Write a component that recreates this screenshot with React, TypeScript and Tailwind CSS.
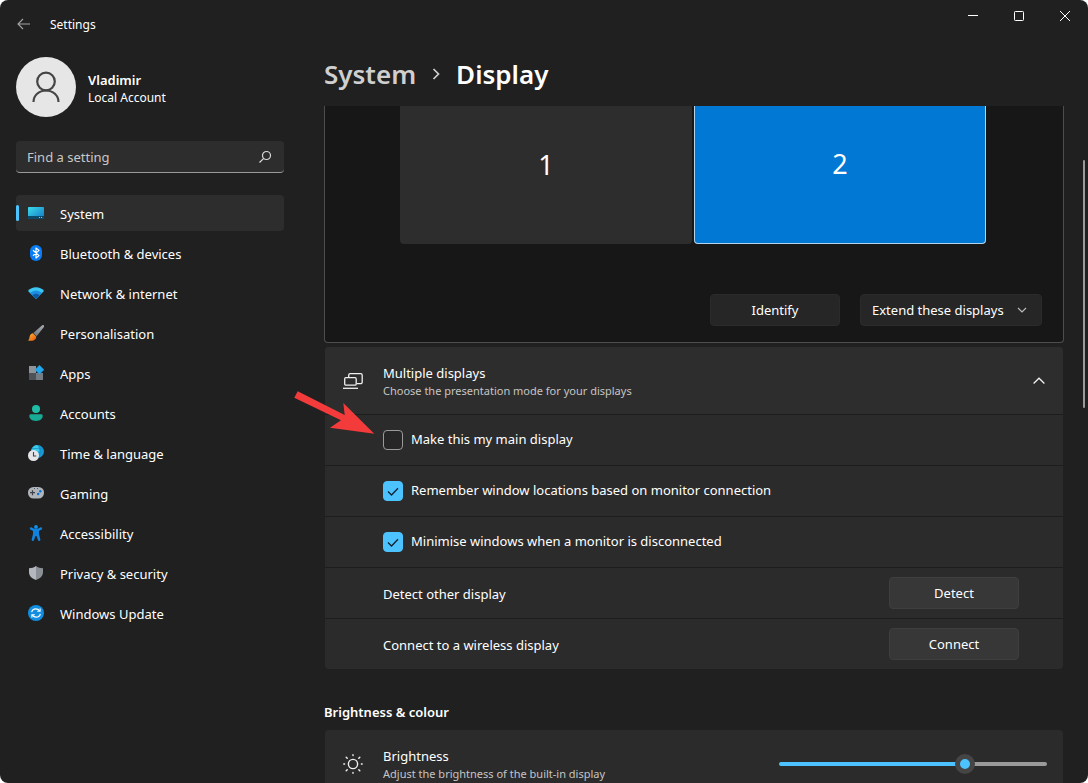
import React, { useState } from "react";

const BluetoothIcon = () => (
  <svg width="16" height="16" viewBox="0 0 16 16">
    <rect x="2" y="0" width="12" height="16" rx="6" fill="#0a7cf5" />
    <path d="M5 5.200 11 10.600 8 13V3l3 2.400-6 5.400" fill="none" stroke="#fff" strokeWidth="1.200" strokeLinejoin="round" />
  </svg>
);

const SystemIcon = () => (
  <svg width="16" height="16" viewBox="0 0 16 16">
    <defs>
      <linearGradient id="sys" x1="0" y1="0" x2="1" y2="1">
        <stop offset="0" stopColor="#3bdcec" />
        <stop offset="1" stopColor="#1276c4" />
      </linearGradient>
    </defs>
    <rect x="0" y="2" width="16" height="12" rx="0.8" fill="url(#sys)" />
    <path d="M0 11h16v2.200a.8.8 0 0 1-.8.8H.8a.8.8 0 0 1-.8-.8z" fill="#0b4a6b" />
    <path d="M11 12.500h1M13 12.500h1" stroke="#7cc8ee" />
  </svg>
);

const NetworkIcon = () => (
  <svg width="16" height="16" viewBox="0 0 16 16">
    <path d="M8 2.300c3.200 0 6 1.300 8 3.700L8 14 0 6c2-2.400 4.800-3.700 8-3.700z" fill="#3cc6f4" />
    <path d="M8 5.600c2.300 0 4.300.9 5.800 2.500L8 14 2.200 8.100C3.700 6.500 5.700 5.600 8 5.600z" fill="#1b8fe0" />
    <path d="M8 8.700c1.400 0 2.700.6 3.600 1.600L8 14l-3.600-3.700C5.300 9.300 6.600 8.700 8 8.700z" fill="#0c59a4" />
  </svg>
);

const BrushIcon = () => (
  <svg width="16" height="16" viewBox="0 0 16 16">
    <defs>
      <linearGradient id="brush" x1="0" y1="1" x2="1" y2="0">
        <stop offset="0" stopColor="#6b7177" />
        <stop offset="1" stopColor="#a9afb5" />
      </linearGradient>
      <linearGradient id="tip" x1="0" y1="0" x2="1" y2="1">
        <stop offset="0" stopColor="#fdb935" />
        <stop offset="1" stopColor="#e8540c" />
      </linearGradient>
    </defs>
    <path d="M15.700.3c.5.5.4 1.300 0 2L8.600 11.300 5.300 8 13.600.7c.7-.6 1.600-.8 2.100-.4z" fill="url(#brush)" />
    <path d="M4.900 8.300 8.200 11.500c.2 1.800-1 3.300-2.700 3.900-1.800.6-3.900.6-5.500.1C1.600 14.400 1.300 12.900 1.700 11.300 2.100 9.600 3.400 8.500 4.900 8.300z" fill="url(#tip)" />
  </svg>
);

const AppsIcon = () => (
  <svg width="16" height="16" viewBox="0 0 16 16">
    <rect x="1" y="1" width="7" height="7" fill="#8d949c" />
    <rect x="1" y="8" width="7" height="7" fill="#4d5258" />
    <rect x="8" y="8" width="7" height="7" fill="#757c84" />
    <path d="M11.500.3 15.900 4.700 11.500 9.100 7.100 4.700z" fill="#22a7ec" stroke="#22a7ec" strokeWidth=".6" strokeLinejoin="round" />
  </svg>
);

const AccountsIcon = () => (
  <svg width="16" height="16" viewBox="0 0 16 16">
    <circle cx="8" cy="4" r="4" fill="#20bda6" />
    <path d="M2.800 9.300h10.400c.9 0 1.500.6 1.500 1.500 0 3.200-2.800 5.200-6.700 5.200s-6.700-2-6.700-5.200c0-.9.6-1.500 1.500-1.500z" fill="#18ab96" />
  </svg>
);

const TimeIcon = () => (
  <svg width="16" height="16" viewBox="0 0 16 16">
    <circle cx="9.500" cy="6.500" r="6.500" fill="#1799d4" />
    <path d="M9.500 0C5.500.2 3.400 3 3 6.500h8.500C11.800 4 11 1.500 9.500 0z" fill="#3ccbe8" />
    <path d="M9.500 0c3.500 4 3.500 9 0 13M4 3.500h11" fill="none" stroke="#1584c0" strokeWidth=".6" />
    <circle cx="5.500" cy="10.500" r="5.500" fill="#e3e5e8" />
    <path d="M5.500 7v4h2.800" fill="none" stroke="#3c4248" strokeWidth="1.100" />
  </svg>
);

const GamingIcon = () => (
  <svg width="16" height="16" viewBox="0 0 16 16">
    <rect x="0" y="2" width="16" height="11.500" rx="5.500" fill="#b0b5bb" />
    <path d="M4.500 5.200v5M2 7.700h5" stroke="#3c4248" strokeWidth="1.200" />
    <path d="M6 3.500h1M9 3.500h1" stroke="#555b61" />
    <circle cx="12.300" cy="6.200" r="1.200" fill="#0a6fd6" />
    <circle cx="10.200" cy="9" r="1.200" fill="#0a6fd6" />
  </svg>
);

const AccessibilityIcon = () => (
  <svg width="16" height="16" viewBox="0 0 16 16">
    <circle cx="8" cy="1.900" r="1.900" fill="#1590e6" />
    <path d="M2 2.800c.5-.8 1.200-.7 1.800-.3C6.200 4.300 9.800 4.300 12.200 2.500c.6-.4 1.300-.5 1.800.3.400.7.100 1.300-.4 1.700-.8.600-1.800 1.100-2.600 1.500v3l1.300 5.300c.2.800-.1 1.400-.8 1.600-.7.200-1.300-.2-1.500-.9L8.500 11h-1L6 15c-.2.700-.8 1.100-1.500.9-.7-.2-1-.8-.8-1.600L5 9V6C4.200 5.600 3.200 5.100 2.400 4.500 1.900 4.100 1.600 3.500 2 2.800z" fill="#1183dc" />
  </svg>
);

const ShieldIcon = () => (
  <svg width="16" height="16" viewBox="0 0 16 16">
    <path d="M8 1c2 1.500 4.300 2.200 7 2.300V7c0 3.600-2.300 6.300-7 8z" fill="#8b9097" />
    <path d="M8 1C6 2.500 3.700 3.200 1 3.300V7c0 3.600 2.300 6.300 7 8z" fill="#b4b8be" />
  </svg>
);

const UpdateIcon = () => (
  <svg width="16" height="16" viewBox="0 0 16 16">
    <circle cx="8" cy="8" r="8" fill="#128ee0" />
    <path d="M3.700 7.200C4.100 5.100 5.800 3.900 7.900 3.900c1.600 0 2.900.8 3.700 2M12.300 8.800c-.4 2.100-2.100 3.300-4.200 3.300-1.600 0-2.900-.8-3.700-2" fill="none" stroke="#fff" strokeWidth="1.200" />
    <path d="M12.100 3.400v2.900H9.200M3.900 12.600V9.700h2.900" fill="none" stroke="#fff" strokeWidth="1.100" />
  </svg>
);

const nav = [
  { label: "System", Icon: SystemIcon },
  { label: "Bluetooth & devices", Icon: BluetoothIcon },
  { label: "Network & internet", Icon: NetworkIcon },
  { label: "Personalisation", Icon: BrushIcon },
  { label: "Apps", Icon: AppsIcon },
  { label: "Accounts", Icon: AccountsIcon },
  { label: "Time & language", Icon: TimeIcon },
  { label: "Gaming", Icon: GamingIcon },
  { label: "Accessibility", Icon: AccessibilityIcon },
  { label: "Privacy & security", Icon: ShieldIcon },
  { label: "Windows Update", Icon: UpdateIcon },
];

function TitleBar() {
  return (
    <header className="flex h-12 shrink-0 items-start justify-between">
      <div className="flex h-12 items-center">
        <button aria-label="Back" className="flex h-12 w-12 items-center justify-center">
          <svg width="14" height="12" viewBox="0 0 14 12" fill="none" stroke="#a3a3a3" strokeWidth="1.100">
            <path d="M13 6H1M6 1 1 6l5 5" />
          </svg>
        </button>
        <span className="pt-0.5 pl-0.5 text-xs">Settings</span>
      </div>
      <div className="flex">
        <button aria-label="Minimise" className="flex h-8 w-[46px] items-center justify-center">
          <svg width="10" height="10" viewBox="0 0 10 10" stroke="#fff"><path d="M0 4.500h10" /></svg>
        </button>
        <button aria-label="Maximise" className="flex h-8 w-[46px] items-center justify-center">
          <svg width="10" height="10" viewBox="0 0 10 10" fill="none" stroke="#fff"><rect x=".5" y=".5" width="9" height="9" rx=".8" /></svg>
        </button>
        <button aria-label="Close" className="flex h-8 w-[46px] items-center justify-center">
          <svg width="10" height="10" viewBox="0 0 10 10" stroke="#fff"><path d="M0 0l10 10M10 0 0 10" /></svg>
        </button>
      </div>
    </header>
  );
}

function Sidebar() {
  return (
    <aside className="w-[300px] shrink-0 px-4 pt-[9px]">
      <div className="flex items-center gap-3">
        <div className="flex size-[60px] items-center justify-center rounded-full bg-[#e6e6e6]">
          <svg width="28" height="32" viewBox="0 0 28 32" fill="none" stroke="#454545" strokeWidth="2.200">
            <circle cx="14" cy="10.500" r="8.800" />
            <path d="M1.500 31C1.500 24.500 7 19.500 14 19.500s12.500 5 12.500 11.500" />
          </svg>
        </div>
        <div className="pt-0.5">
          <div className="text-[13px] leading-5 font-semibold">Vladimir</div>
          <div className="text-xs leading-4">Local Account</div>
        </div>
      </div>
      <div className="mt-6 flex h-8 items-center rounded border-b border-[#9a9a9a] bg-[#2d2d2d] pr-3 pl-[11px]">
        <input
          type="text"
          aria-label="Find a setting"
          placeholder="Find a setting"
          className="min-w-0 flex-1 bg-transparent pt-0.5 text-[13px] outline-none placeholder:text-[#c8c8c8]"
        />
        <svg width="14" height="14" viewBox="0 0 14 14" fill="none" stroke="#dcdcdc" strokeWidth="1.200">
          <circle cx="8.500" cy="5.500" r="4" />
          <path d="M5.700 8.300 1.500 12.500" />
        </svg>
      </div>
      <nav className="mt-[22px] flex flex-col gap-1">
        {nav.map(({ label, Icon }, i) => (
          <a
            key={label}
            href="#"
            aria-current={i === 0 ? "page" : undefined}
            className={
              i === 0
                ? "relative flex h-9 items-center gap-4 rounded bg-[#2d2d2d] pl-3 text-[13px]"
                : "relative flex h-9 items-center gap-4 rounded pl-3 text-[13px]"
            }
          >
            {i === 0 && <span className="absolute left-0 h-4 w-[3px] rounded-full bg-[#4cc2ff]" />}
            <Icon />
            <span className="pt-1">{label}</span>
          </a>
        ))}
      </nav>
    </aside>
  );
}

function DisplayArrangement() {
  return (
    <section className="rounded-b border border-t-0 border-[#4d4d4d] bg-[#171717]">
      <div className="grid h-[138px] grid-cols-2 gap-0.5 pr-[77px] pl-[75px] text-[27px]">
        <button className="rounded-b bg-[#2d2d2d] pb-5">1</button>
        <button className="rounded-b border border-t-0 border-[#b5d3ea] bg-[#0078d4] pb-5">2</button>
      </div>
      <div className="flex justify-end gap-5 pt-[50px] pr-[21px] pb-4">
        <button className="h-8 w-[130px] rounded border border-[#2b2b2b] bg-[#262626] pt-0.5 text-[13px]">Identify</button>
        <div className="relative w-[182px]">
          <select
            aria-label="Display mode"
            className="h-8 w-full appearance-none rounded border border-[#2b2b2b] bg-[#262626] pt-0.5 pl-[11px] text-[13px]"
          >
            <option>Extend these displays</option>
          </select>
          <svg className="pointer-events-none absolute top-3 right-[15px]" width="10" height="8" viewBox="0 0 10 8" fill="none" stroke="#bdbdbd" strokeWidth="1.100">
            <path d="M1 2l4 4 4-4" />
          </svg>
        </div>
      </div>
    </section>
  );
}

function CheckRow({ label, initial, children }: { label: string; initial: boolean; children?: React.ReactNode }) {
  const [on, setOn] = useState(initial);
  return (
    <div className="relative flex h-[51px] items-center border-t border-[#1d1d1d] pl-[58px]">
      <label className="flex items-center gap-2 text-[13px]">
        <span className="relative flex size-5">
          <input
            type="checkbox"
            checked={on}
            onChange={(e) => setOn(e.target.checked)}
            className="size-5 appearance-none rounded-[4px] border border-[#9a9a9a] bg-[#262626] checked:border-[#4cc2ff] checked:bg-[#4cc2ff]"
          />
          {on && (
            <svg className="pointer-events-none absolute inset-0" width="20" height="20" viewBox="0 0 20 20" fill="none" stroke="#10222c" strokeWidth="1.300">
              <path d="M5 10.500 8.500 14 15 7.200" />
            </svg>
          )}
        </span>
        {label}
      </label>
      {children}
    </div>
  );
}

function ActionRow({ label, action }: { label: string; action: string }) {
  return (
    <div className="flex h-[51px] items-center justify-between border-t border-[#1d1d1d] pr-11 pl-[58px] text-[13px]">
      <span className="pt-1">{label}</span>
      <button className="h-8 w-[130px] rounded border border-[#3e3e3e] bg-[#373737] pt-0.5">{action}</button>
    </div>
  );
}

function MultipleDisplays() {
  return (
    <section className="mx-px mt-1 rounded bg-[#2b2b2b]">
      <div className="flex h-[67px] items-center rounded-t bg-[#2d2d2d] px-[18px]">
        <svg width="20" height="18" viewBox="0 0 20 18" fill="none" stroke="#f0f0f0" strokeWidth="1.300">
          <path d="M5.700 5.200V3.200A1.500 1.500 0 0 1 7.200 1.700h10.500a1.500 1.500 0 0 1 1.500 1.500v7a1.500 1.500 0 0 1-1.500 1.500H13.500" />
          <rect x="1.700" y="5.700" width="11.500" height="7.500" rx="1.200" />
          <path d="M0 16.300h15" />
        </svg>
        <div className="ml-5 flex-1">
          <div className="text-[13px] leading-5">Multiple displays</div>
          <div className="text-[11px] leading-4 text-[#c5c5c5]">Choose the presentation mode for your displays</div>
        </div>
        <button aria-label="Collapse multiple displays">
          <svg width="12" height="8" viewBox="0 0 12 8" fill="none" stroke="#f5f5f5" strokeWidth="1.200">
            <path d="M.6 6.500 6 1.200l5.400 5.300" />
          </svg>
        </button>
      </div>
      <CheckRow label="Make this my main display" initial={false}>
        <svg className="pointer-events-none absolute -top-6 -left-8" width="84" height="48" viewBox="293 391 84 48" fill="#f43b3b">
          <path d="M297.700 391.300 344.700 415 343.300 403 374.300 433.700 330 427.700 341 420.300 294.300 397.700z" />
        </svg>
      </CheckRow>
      <CheckRow label="Remember window locations based on monitor connection" initial={true} />
      <CheckRow label="Minimise windows when a monitor is disconnected" initial={true} />
      <ActionRow label="Detect other display" action="Detect" />
      <ActionRow label="Connect to a wireless display" action="Connect" />
    </section>
  );
}

function Brightness() {
  const [value, setValue] = useState(71);
  const track = `linear-gradient(to right, #4cc2ff ${value}%, #9a9a9a ${value}%)`;
  return (
    <>
      <h2 className="mt-[33px] text-[13px] leading-5 font-semibold">Brightness &amp; colour</h2>
      <section className="mx-px mt-2 flex h-[68px] items-center rounded bg-[#2b2b2b] pr-4 pl-[18px]">
        <svg width="20" height="20" viewBox="0 0 20 20" fill="none" stroke="#f0f0f0" strokeWidth="1.400" strokeLinecap="round">
          <circle cx="10" cy="10" r="4.600" />
          <path d="M10 .8v.8M10 18.400v.8M.8 10h.8M18.400 10h.8M3.200 3.200l1 1M15.800 15.800l1 1M3.200 16.800l1-1M15.800 4.200l1-1" />
        </svg>
        <div className="ml-5 flex-1">
          <label htmlFor="brightness" className="block text-[13px] leading-5">Brightness</label>
          <div className="text-[11px] leading-4 text-[#c5c5c5]">Adjust the brightness of the built-in display</div>
        </div>
        <input
          id="brightness"
          type="range"
          value={value}
          onChange={(e) => setValue(Number(e.target.value))}
          style={{ backgroundImage: track }}
          className="h-1 w-[268px] appearance-none rounded-full [&::-webkit-slider-thumb]:size-5 [&::-webkit-slider-thumb]:appearance-none [&::-webkit-slider-thumb]:rounded-full [&::-webkit-slider-thumb]:border-[5px] [&::-webkit-slider-thumb]:border-[#454545] [&::-webkit-slider-thumb]:bg-[#4cc2ff]"
        />
      </section>
    </>
  );
}

export default function App() {
  return (
    <div className="flex h-screen flex-col overflow-hidden rounded-lg bg-[#202020] font-['Noto_Sans','Open_Sans',sans-serif] text-white">
      <TitleBar />
      <div className="flex min-h-0 flex-1">
        <Sidebar />
        <main className="min-w-0 flex-1 pl-6">
          <h1 className="flex h-[58px] items-start pt-2 text-[26px] leading-9 font-semibold">
            <a href="#" className="text-[#cfcfcf]">System</a>
            <svg className="mx-3.5 mt-3" width="12" height="12" viewBox="0 0 12 12" fill="none" stroke="#cfcfcf" strokeWidth="1.700">
              <path d="M3.500 1l5 5-5 5" />
            </svg>
            <span>Display</span>
          </h1>
          <DisplayArrangement />
          <MultipleDisplays />
          <Brightness />
        </main>
        <div className="w-6 shrink-0 pt-28 pl-[19px]">
          <div className="h-[248px] w-0.5 rounded-full bg-[#9a9a9a]" />
        </div>
      </div>
    </div>
  );
}
